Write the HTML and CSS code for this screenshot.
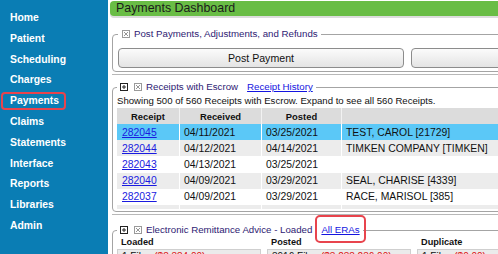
FILE: index.html
```html
<!DOCTYPE html>
<html lang="en">
<head>
    <meta charset="UTF-8">
    <meta name="viewport" content="width=device-width, initial-scale=1.0">
    <title>Payments Dashboard</title>
    <link rel="stylesheet" href="styles.css">
</head>
<body>
    <nav class="sidebar">
        <a class="nav-link" href="#"><span>Home</span></a>
        <a class="nav-link" href="#"><span>Patient</span></a>
        <a class="nav-link" href="#"><span>Scheduling</span></a>
        <a class="nav-link" href="#"><span>Charges</span></a>
        <a class="nav-link active" href="#"><span>Payments</span></a>
        <a class="nav-link" href="#"><span>Claims</span></a>
        <a class="nav-link" href="#"><span>Statements</span></a>
        <a class="nav-link" href="#"><span>Interface</span></a>
        <a class="nav-link" href="#"><span>Reports</span></a>
        <a class="nav-link" href="#"><span>Libraries</span></a>
        <a class="nav-link" href="#"><span>Admin</span></a>
    </nav>

    <main class="content">
        <div class="page-title">Payments Dashboard</div>

        <div class="section">
            <fieldset class="panel panel-post">
                <legend>
                    <svg class="ico ico-close" width="8" height="8" viewBox="0 0 8 8"><rect x="0.5" y="0.5" width="7" height="7" fill="#fff" stroke="#9a9a9a"/><path d="M2 2L6 6M6 2L2 6" stroke="#8a8a8a" stroke-width="0.9"/></svg>Post Payments, Adjustments, and Refunds
                </legend>
                <div class="button-row">
                    <button type="button">Post Payment</button>
                    <button type="button">Post Refund</button>
                </div>
            </fieldset>
        </div>

        <div class="section">
            <fieldset class="panel panel-receipts">
                <legend>
                    <svg class="ico ico-open" width="8" height="8" viewBox="0 0 8 8"><rect x="0.5" y="0.5" width="7" height="7" fill="#fff" stroke="#222"/><path d="M2 4H6M4 2V6" stroke="#222"/></svg><svg class="ico ico-close" width="8" height="8" viewBox="0 0 8 8"><rect x="0.5" y="0.5" width="7" height="7" fill="#fff" stroke="#9a9a9a"/><path d="M2 2L6 6M6 2L2 6" stroke="#8a8a8a" stroke-width="0.9"/></svg>Receipts with Escrow<a class="legend-link" href="#">Receipt History</a>
                </legend>
                <div class="summary">Showing 500 of 560 Receipts with Escrow. Expand to see all 560 Receipts.</div>
                <div class="scroll">
                    <table class="receipts">
                        <thead>
                            <tr>
                                <th class="col-receipt">Receipt</th>
                                <th class="col-date">Received</th>
                                <th class="col-posted">Posted</th>
                                <th></th>
                            </tr>
                        </thead>
                        <tbody>
                            <tr class="selected">
                                <td><a href="#">282045</a></td>
                                <td>04/11/2021</td>
                                <td>03/25/2021</td>
                                <td>TEST, CAROL [21729]</td>
                            </tr>
                            <tr class="alt">
                                <td><a href="#">282044</a></td>
                                <td>04/12/2021</td>
                                <td>04/14/2021</td>
                                <td>TIMKEN COMPANY [TIMKEN]</td>
                            </tr>
                            <tr>
                                <td><a href="#">282043</a></td>
                                <td>04/13/2021</td>
                                <td>03/25/2021</td>
                                <td></td>
                            </tr>
                            <tr class="alt">
                                <td><a href="#">282040</a></td>
                                <td>04/09/2021</td>
                                <td>03/29/2021</td>
                                <td>SEAL, CHARISE [4339]</td>
                            </tr>
                            <tr>
                                <td><a href="#">282037</a></td>
                                <td>04/09/2021</td>
                                <td>03/29/2021</td>
                                <td>RACE, MARISOL [385]</td>
                            </tr>
                            <tr class="alt">
                                <td><a href="#">282036</a></td>
                                <td>04/08/2021</td>
                                <td>03/30/2021</td>
                                <td>LOCK, MILLIE [410]</td>
                            </tr>
                        </tbody>
                    </table>
                </div>
            </fieldset>
        </div>

        <div class="section">
            <fieldset class="panel panel-era">
                <legend>
                    <svg class="ico ico-open" width="8" height="8" viewBox="0 0 8 8"><rect x="0.5" y="0.5" width="7" height="7" fill="#fff" stroke="#222"/><path d="M2 4H6M4 2V6" stroke="#222"/></svg><svg class="ico ico-close" width="8" height="8" viewBox="0 0 8 8"><rect x="0.5" y="0.5" width="7" height="7" fill="#fff" stroke="#9a9a9a"/><path d="M2 2L6 6M6 2L2 6" stroke="#8a8a8a" stroke-width="0.9"/></svg>Electronic Remittance Advice - Loaded<a class="legend-link marked" href="#">All ERAs</a>
                </legend>
                <div class="era-grid">
                    <div class="era-head">Loaded</div>
                    <div class="era-head">Posted</div>
                    <div class="era-head">Duplicate</div>
                    <div class="era-box">1 Files <span class="amount">($8,384.00)</span></div>
                    <div class="era-box">3916 Files <span class="amount">($3,238,236.00)</span></div>
                    <div class="era-box">1 Files <span class="amount">($0.00)</span></div>
                </div>
            </fieldset>
        </div>
    </main>
</body>
</html>
```

FILE: styles.css
```css
body {
    margin: 0;
    width: 498px;
    height: 254px;
    overflow: hidden;
    display: flex;
    font-family: "Liberation Sans", Arial, sans-serif;
    background: #fff;
    color: #111;
}

/* left navigation */
.sidebar {
    flex: none;
    width: 108px;
    height: 254px;
    box-sizing: border-box;
    padding-top: 7.6px;
    background-color: #0a7db4;
}
.nav-link {
    display: flex;
    align-items: center;
    height: 20.8px;
    padding-left: 1px;
    color: #fff;
    font-size: 10.4px;
    font-weight: bold;
    text-decoration: none;
}
.nav-link span {
    display: inline-block;
    line-height: 14px;
    padding: 0 5px 0 7px;
    border: 2px solid transparent;
    border-radius: 4px;
}
.nav-link.active span {
    border-color: #e8444d;
}

/* main area */
.content {
    flex: none;
    width: 640px;
}
.page-title {
    margin: 1px 0 0 2px;
    height: 15px;
    line-height: 15px;
    padding-left: 6px;
    background-color: #69bd45;
    border-radius: 4px 0 0 4px;
    box-shadow: 0 2px 0 #dcdcdc;
    font-size: 12.4px;
    color: #1b1b1b;
}
.section {
    margin-left: 4px;
    padding-bottom: 2px;
    border-bottom: 1px solid #b8b8b8;
}
.panel {
    margin: 0;
    min-width: 0;
    border: 1px solid #a4a4a4;
    border-radius: 4px;
}
legend {
    padding: 0 3px;
    font-size: 9.7px;
    line-height: 12px;
    color: #2e1a72;
    white-space: nowrap;
}
.ico {
    display: inline-block;
    vertical-align: -1px;
    margin-right: 4px;
}
.ico-open {
    margin-right: 6px;
}
.legend-link {
    margin-left: 9px;
    color: #1414e0;
    text-decoration: underline;
}

/* post payments */
.panel-post {
    margin-top: 12px;
    padding: 8px 0 3px 5px;
}
.panel-post legend {
    padding-left: 4px;
}
.button-row {
    display: flex;
    gap: 7px;
}
.button-row button {
    width: 286px;
    height: 20px;
    padding: 0;
    border: 1px solid #8c8c8c;
    border-radius: 4px;
    background: linear-gradient(#fbfbfb, #e4e4e4);
    font-family: inherit;
    font-size: 10.6px;
    color: #111;
}

/* receipts */
.panel-receipts {
    margin-top: 6px;
    padding: 2px 0 2px 4px;
}
.summary {
    font-size: 9.6px;
    line-height: 12px;
    margin-bottom: 1px;
}
.scroll {
    height: 101px;
    overflow: hidden;
}
.receipts {
    width: 560px;
    border-collapse: collapse;
    font-size: 10.4px;
}
.receipts th {
    height: 16px;
    padding: 0;
    background-color: #dcdcdc;
    border-left: 1px solid #f2f2f2;
    font-size: 9.4px;
    font-weight: bold;
    text-align: center;
}
.receipts th:first-child {
    border-left: none;
}
.col-receipt { width: 62px; }
.col-date { width: 81px; }
.col-posted { width: 79px; }
.receipts td {
    height: 16.2px;
    padding: 0 0 0 4px;
    border-left: 1px solid #fff;
    white-space: nowrap;
}
.receipts td:first-child {
    border-left: none;
    padding-left: 5px;
}
.receipts tr.alt td {
    background-color: #ececec;
}
.receipts tr.selected td {
    background-color: #5bc8f7;
}
.receipts a {
    color: #1a1ae0;
}

/* electronic remittance */
.panel-era {
    margin-top: 9px;
    padding: 0 0 4px 4px;
}
.marked {
    position: relative;
}
.marked::after {
    content: "";
    position: absolute;
    top: -9px;
    bottom: -8px;
    left: -6px;
    right: -6px;
    border: 2px solid #e8444d;
    border-radius: 5px;
}
.era-grid {
    display: grid;
    grid-template-columns: 144px 144px 144px;
    column-gap: 6px;
}
.era-head {
    padding-left: 4px;
    font-size: 9.2px;
    font-weight: bold;
    line-height: 12px;
    margin-bottom: 1px;
}
.era-box {
    height: 14px;
    line-height: 14px;
    padding-left: 4px;
    border: 1px solid #cfcfcf;
    background-color: #ebebeb;
    font-size: 10px;
}
.amount {
    color: #e01010;
}
```
